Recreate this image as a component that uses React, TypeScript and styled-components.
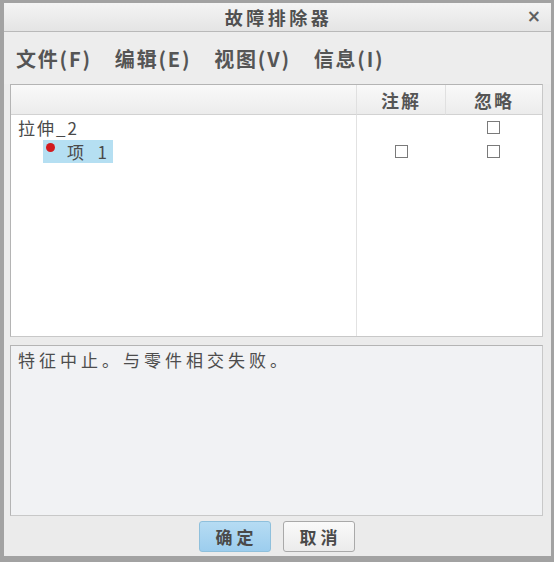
import React, { FC } from 'react';
import styled, { createGlobalStyle } from 'styled-components';

const GlobalStyle = createGlobalStyle`
  html, body {
    margin: 0;
    padding: 0;
    background: #ffffff;
  }
  body {
    font-family: 'Noto Sans CJK SC', 'DejaVu Sans', sans-serif;
  }
`;

const Window = styled.div`
  box-sizing: border-box;
  width: 554px;
  height: 562px;
  display: flex;
  flex-direction: column;
  background: #ebebeb;
  border: 3px solid #a2a2a2;
  border-left-width: 4px;
  border-bottom-width: 6px;
`;

const TitleBar = styled.div`
  position: relative;
  height: 28px;
  flex: none;
  display: flex;
  align-items: center;
  justify-content: center;
  background: linear-gradient(#f4f4f4, #e4e4e4);
  border-bottom: 1px solid #b9b9b9;
  font-size: 18px;
  font-weight: bold;
  color: #505050;
  letter-spacing: 3.5px;
  padding-left: 2px;
`;

const CloseButton = styled.span`
  position: absolute;
  right: 10px;
  top: 3px;
  font-size: 17px;
  font-family: 'DejaVu Sans', sans-serif;
  font-weight: bold;
  color: #606060;
  letter-spacing: 0;
`;

const MenuBar = styled.div`
  height: 52px;
  flex: none;
  display: flex;
  align-items: center;
  gap: 23px;
  padding: 0 0 0 12px;
  background: #ededed;
`;

const MenuItem = styled.span`
  font-size: 20px;
  font-weight: bold;
  color: #555555;
  letter-spacing: 1.8px;
`;

const Panel = styled.div<{ $height: number; $bg: string }>`
  box-sizing: border-box;
  margin: 0 8px 0 6px;
  height: ${(p) => p.$height}px;
  flex: none;
  background: ${(p) => p.$bg};
  border: 1px solid #b4b4b4;
  border-right-color: #c8c8c8;
  border-bottom-color: #c8c8c8;
`;

const TreeGrid = styled.div`
  height: 100%;
  display: grid;
  grid-template-columns: 1fr 89px 97px;
  grid-template-rows: 30px 24px 24px 1fr;
`;

const HeaderCell = styled.div<{ $sep?: boolean }>`
  display: flex;
  align-items: flex-end;
  justify-content: center;
  padding-bottom: 1px;
  background: linear-gradient(#f9f9f9, #ececec);
  border-bottom: 1px solid #d2d2d2;
  border-left: ${(p) => (p.$sep ? '1px solid #e0e0e0' : 'none')};
  font-size: 18px;
  font-weight: bold;
  color: #555555;
  letter-spacing: 2px;
`;

const NameCell = styled.div<{ $indent?: number }>`
  display: flex;
  align-items: center;
  padding-left: ${(p) => p.$indent ?? 7}px;
  font-size: 17px;
  color: #4a4a4a;
  letter-spacing: 2px;
`;

const CheckCell = styled.div<{ $line?: boolean }>`
  display: flex;
  align-items: center;
  justify-content: center;
  border-left: ${(p) => (p.$line ? '1px solid #e2e2e2' : 'none')};
`;

const Filler = styled.div<{ $line?: boolean }>`
  border-left: ${(p) => (p.$line ? '1px solid #e2e2e2' : 'none')};
`;

const Box = styled.span`
  box-sizing: border-box;
  width: 13px;
  height: 13px;
  border: 1px solid #7a7a7a;
  background: #ffffff;
`;

const Selected = styled.span`
  display: flex;
  align-items: center;
  gap: 12px;
  height: 23px;
  padding: 0 4px 0 3px;
  background: #b5dff2;
  white-space: pre;
`;

const Dot = styled.span`
  width: 9px;
  height: 9px;
  border-radius: 50%;
  background: #d21a1f;
  margin-top: -8px;
`;

const Gap = styled.div`
  height: 8px;
  flex: none;
`;

const Message = styled.div`
  padding: 1px 7px;
  font-size: 17px;
  color: #4d4d4d;
  letter-spacing: 4px;
`;

const ButtonRow = styled.div`
  flex: 1;
  display: flex;
  align-items: center;
  justify-content: center;
  gap: 12px;
  padding-right: 2px;
`;

const Button = styled.button<{ $primary?: boolean }>`
  box-sizing: border-box;
  width: 72px;
  height: 31px;
  border-radius: 3px;
  border: 1px solid ${(p) => (p.$primary ? '#8fc0dc' : '#a9a9a9')};
  background: ${(p) => (p.$primary ? 'linear-gradient(#b6dcf3, #9ccdee)' : 'linear-gradient(#fafafa, #ebebeb)')};
  font-family: 'Noto Sans CJK SC', sans-serif;
  font-size: 17px;
  font-weight: bold;
  color: #4a4a4a;
  letter-spacing: 4px;
  padding: 0 0 0 4px;
`;

const App: FC = () => {
  const menus = ['文件(F)', '编辑(E)', '视图(V)', '信息(I)'];

  return (
    <>
      <GlobalStyle />
      <Window>
        <TitleBar>
          故障排除器
          <CloseButton>×</CloseButton>
        </TitleBar>
        <MenuBar>
          {menus.map((m) => (
            <MenuItem key={m}>{m}</MenuItem>
          ))}
        </MenuBar>
        <Panel $height={253} $bg="#ffffff">
          <TreeGrid>
            <HeaderCell />
            <HeaderCell $sep>注解</HeaderCell>
            <HeaderCell $sep>忽略</HeaderCell>

            <NameCell>拉伸_2</NameCell>
            <CheckCell $line />
            <CheckCell>
              <Box />
            </CheckCell>

            <NameCell $indent={32}>
              <Selected>
                <Dot />
                项  1
              </Selected>
            </NameCell>
            <CheckCell $line>
              <Box />
            </CheckCell>
            <CheckCell>
              <Box />
            </CheckCell>

            <Filler />
            <Filler $line />
            <Filler />
          </TreeGrid>
        </Panel>
        <Gap />
        <Panel $height={171} $bg="#f1f2f4">
          <Message>特征中止。与零件相交失败。</Message>
        </Panel>
        <ButtonRow>
          <Button $primary>确定</Button>
          <Button>取消</Button>
        </ButtonRow>
      </Window>
    </>
  );
};

export default App;
